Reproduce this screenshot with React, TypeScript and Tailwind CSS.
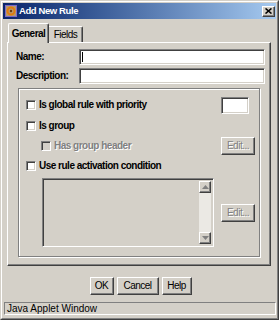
import React from 'react';

const raised =
  'border border-t-white border-l-white border-r-[#404040] border-b-[#404040] shadow-[inset_-1px_-1px_0_#808080]';
const sunken =
  'border border-t-[#808080] border-l-[#808080] border-r-white border-b-white shadow-[inset_1px_1px_0_#404040,inset_-1px_-1px_0_#d4d0c8]';

function Checkbox({ disabled }: { disabled?: boolean }) {
  return (
    <span
      className={`w-[10px] h-[10px] shrink-0 ${sunken} ${disabled ? 'bg-[#d4d0c8]' : 'bg-white'}`}
    />
  );
}

function Button({ label, width, disabled }: { label: string; width: string; disabled?: boolean }) {
  return (
    <div
      className={`${width} h-[18px] ${raised} flex items-center justify-center ${
        disabled ? 'text-[#808080] [text-shadow:1px_1px_0_white]' : ''
      }`}
    >
      {label}
    </div>
  );
}

function TitleIcon() {
  return (
    <svg width="12" height="12" viewBox="0 0 12 12">
      <rect x="0" y="0" width="12" height="12" fill="#7b68c8" />
      <rect x="1" y="1" width="10" height="10" fill="#b59a6a" />
      <circle cx="6" cy="6" r="3.5" fill="none" stroke="#e07a10" strokeWidth="2" />
      <circle cx="6" cy="6" r="1.2" fill="#6b3a10" />
    </svg>
  );
}

function ScrollArrow({ up }: { up?: boolean }) {
  return (
    <div className={`h-[12px] ${raised} bg-[#d4d0c8] flex items-center justify-center`}>
      <svg width="7" height="4" viewBox="0 0 7 4">
        <polygon points={up ? '3.5,0 7,4 0,4' : '0,0 7,0 3.5,4'} fill="#808080" />
      </svg>
    </div>
  );
}

export default function App() {
  return (
    <div className="w-[279px] h-[320px] bg-[#d4d0c8] border border-t-[#d4d0c8] border-l-[#d4d0c8] border-r-[#404040] border-b-[#404040] font-['Liberation_Sans',Arial,sans-serif] text-[10px] tracking-[-0.5px] leading-none text-black">
      <div className="h-full border border-t-white border-l-white border-r-[#808080] border-b-[#808080] p-px flex flex-col">
        {/* title bar */}
        <div className="h-[16px] shrink-0 flex items-center pl-[2px] pr-[1px] bg-linear-to-r from-[#0a246a] to-[#a6caf0]">
          <TitleIcon />
          <span className="ml-[2px] text-white font-bold text-[9.5px] tracking-[-0.4px]">Add New Rule</span>
          <div className={`ml-auto w-[13px] h-[11px] ${raised} bg-[#d4d0c8] flex items-center justify-center`}>
            <svg width="7" height="6" viewBox="0 0 7 6">
              <path d="M0.5 0.5 L6.5 5.5 M6.5 0.5 L0.5 5.5" stroke="black" strokeWidth="1.6" />
            </svg>
          </div>
        </div>

        {/* tabs */}
        <div className="mt-[4px] pl-[4px] pr-[5px] flex flex-col">
          <div className="flex items-end pl-px">
            <div className="relative z-10 -mb-px h-[20px] w-[41px] bg-[#d4d0c8] border-t border-l border-r border-t-white border-l-white border-r-[#404040] shadow-[inset_-1px_0_0_#808080] rounded-t-[2px] flex items-center justify-center font-bold">
              General
            </div>
            <div className="h-[16px] w-[34px] border-t border-r border-t-white border-r-[#404040] shadow-[inset_-1px_0_0_#808080] rounded-tr-[2px] flex items-center justify-center">
              Fields
            </div>
          </div>

          {/* panel */}
          <div className="h-[224px] border border-t-white border-l-white border-r-[#404040] border-b-[#404040] shadow-[inset_-1px_-1px_0_#808080] pt-[6px] pl-[8px] pr-[5px] flex flex-col">
            <div className="h-[16px] flex items-center">
              <span className="w-[63px] font-bold">Name:</span>
              <div className={`flex-1 h-full bg-white ${sunken} flex items-center pl-[2px]`}>
                <span className="w-px h-[10px] bg-black" />
              </div>
            </div>
            <div className="mt-[3px] h-[16px] flex items-center">
              <span className="w-[63px] font-bold">Description:</span>
              <div className={`flex-1 h-full bg-white ${sunken}`} />
            </div>

            {/* group box */}
            <div className="mt-[4px] ml-[2px] mr-[5px] h-[169px] border border-[#808080] shadow-[1px_1px_0_white,inset_1px_1px_0_white] pt-[6px] pl-[7px] pr-[4px] flex flex-col font-bold">
              <div className="h-[20px] flex items-center">
                <Checkbox />
                <span className="ml-[3px]">Is global rule with priority</span>
                <div className={`ml-auto mr-[6px] w-[28px] h-[17px] bg-white ${sunken}`} />
              </div>
              <div className="h-[21px] flex items-center">
                <Checkbox />
                <span className="ml-[3px]">Is group</span>
              </div>
              <div className="h-[20px] flex items-center">
                <div className="pl-[15px] flex items-center">
                  <Checkbox disabled />
                  <span className="ml-[3px] text-[#808080] [text-shadow:1px_1px_0_white]">Has group header</span>
                </div>
                <div className="ml-auto font-normal">
                  <Button label="Edit..." width="w-[34px]" disabled />
                </div>
              </div>
              <div className="h-[20px] flex items-center">
                <Checkbox />
                <span className="ml-[3px]">Use rule activation condition</span>
              </div>
              <div className="mt-[2px] h-[69px] flex items-center font-normal">
                <div className={`ml-[16px] w-[172px] h-full ${sunken} p-[2px] flex justify-end`}>
                  <div className="w-[12px] h-full bg-[#ebe9e4] flex flex-col justify-between">
                    <ScrollArrow up />
                    <ScrollArrow />
                  </div>
                </div>
                <div className="ml-auto">
                  <Button label="Edit..." width="w-[34px]" disabled />
                </div>
              </div>
            </div>
          </div>
        </div>

        {/* buttons */}
        <div className="mt-[11px] pl-[2px] flex justify-center gap-[3px]">
          <Button label="OK" width="w-[24px]" />
          <Button label="Cancel" width="w-[42px]" />
          <Button label="Help" width="w-[30px]" />
        </div>

        {/* status bar */}
        <div className="mt-[7px] ml-px h-[13px] border border-t-[#808080] border-l-[#808080] border-r-white border-b-white flex items-center pl-[2px] text-[10px] tracking-normal">
          Java Applet Window
        </div>
      </div>
    </div>
  );
}
